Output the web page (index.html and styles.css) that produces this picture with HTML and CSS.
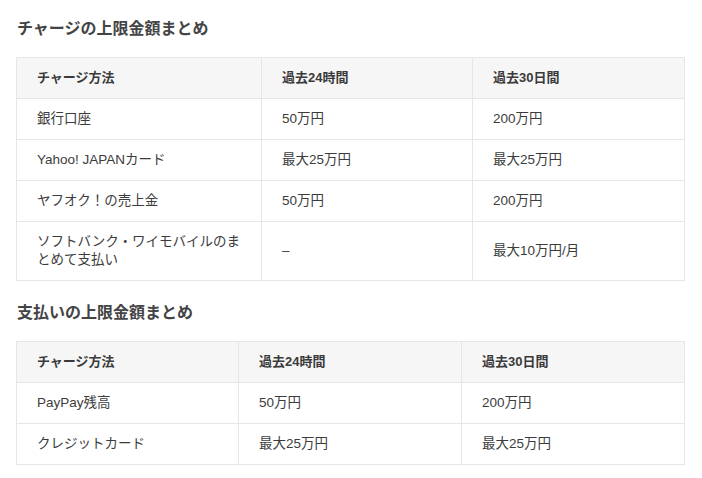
FILE: index.html
```html
<!DOCTYPE html>
<html lang="ja">
<head>
<meta charset="utf-8">
<link rel="stylesheet" href="styles.css">
</head>
<body>
<div class="page">
  <h2 class="title">チャージの上限金額まとめ</h2>
  <table class="limits limits-charge">
    <colgroup><col class="c1"><col class="c2"><col class="c3"></colgroup>
    <thead>
      <tr><th>チャージ方法</th><th>過去24時間</th><th>過去30日間</th></tr>
    </thead>
    <tbody>
      <tr><td>銀行口座</td><td>50万円</td><td>200万円</td></tr>
      <tr><td>Yahoo! JAPANカード</td><td>最大25万円</td><td>最大25万円</td></tr>
      <tr><td>ヤフオク！の売上金</td><td>50万円</td><td>200万円</td></tr>
      <tr><td>ソフトバンク・ワイモバイルのまとめて支払い</td><td>–</td><td>最大10万円/月</td></tr>
    </tbody>
  </table>
  <h2 class="title">支払いの上限金額まとめ</h2>
  <table class="limits limits-pay">
    <colgroup><col class="d1"><col class="d2"><col class="d3"></colgroup>
    <thead>
      <tr><th>チャージ方法</th><th>過去24時間</th><th>過去30日間</th></tr>
    </thead>
    <tbody>
      <tr><td>PayPay残高</td><td>50万円</td><td>200万円</td></tr>
      <tr><td>クレジットカード</td><td>最大25万円</td><td>最大25万円</td></tr>
    </tbody>
  </table>
</div>
</body>
</html>
```

FILE: styles.css
```css
html, body {
  margin: 0;
  padding: 0;
  background: #ffffff;
}

body {
  font-family: "Liberation Sans", "Noto Sans CJK JP", sans-serif;
  color: #333333;
}

.page {
  padding: 15px 17px 0 16px;
  display: flex;
  flex-direction: column;
  gap: 18px;
}

.title {
  margin: 0;
  padding-left: 1px;
  font-family: "Noto Sans CJK JP", sans-serif;
  font-size: 16px;
  line-height: 24px;
  font-weight: 700;
  color: #444444;
}

.limits {
  width: 100%;
  border-collapse: collapse;
  table-layout: fixed;
  font-size: 13.5px;
  line-height: 18px;
}

.limits th,
.limits td {
  border: 1px solid #e6e6e6;
  padding: 11px 20px;
  text-align: left;
  vertical-align: middle;
}

.limits th {
  background: #f6f6f6;
  font-weight: 700;
  font-size: 13px;
  color: #3a3a3a;
}

.limits td {
  color: #3c3c3c;
}

.c1 { width: 245px; }
.c2 { width: 211px; }
.c3 { width: auto; }

.d1 { width: 222px; }
.d2 { width: 223px; }
.d3 { width: auto; }
```
